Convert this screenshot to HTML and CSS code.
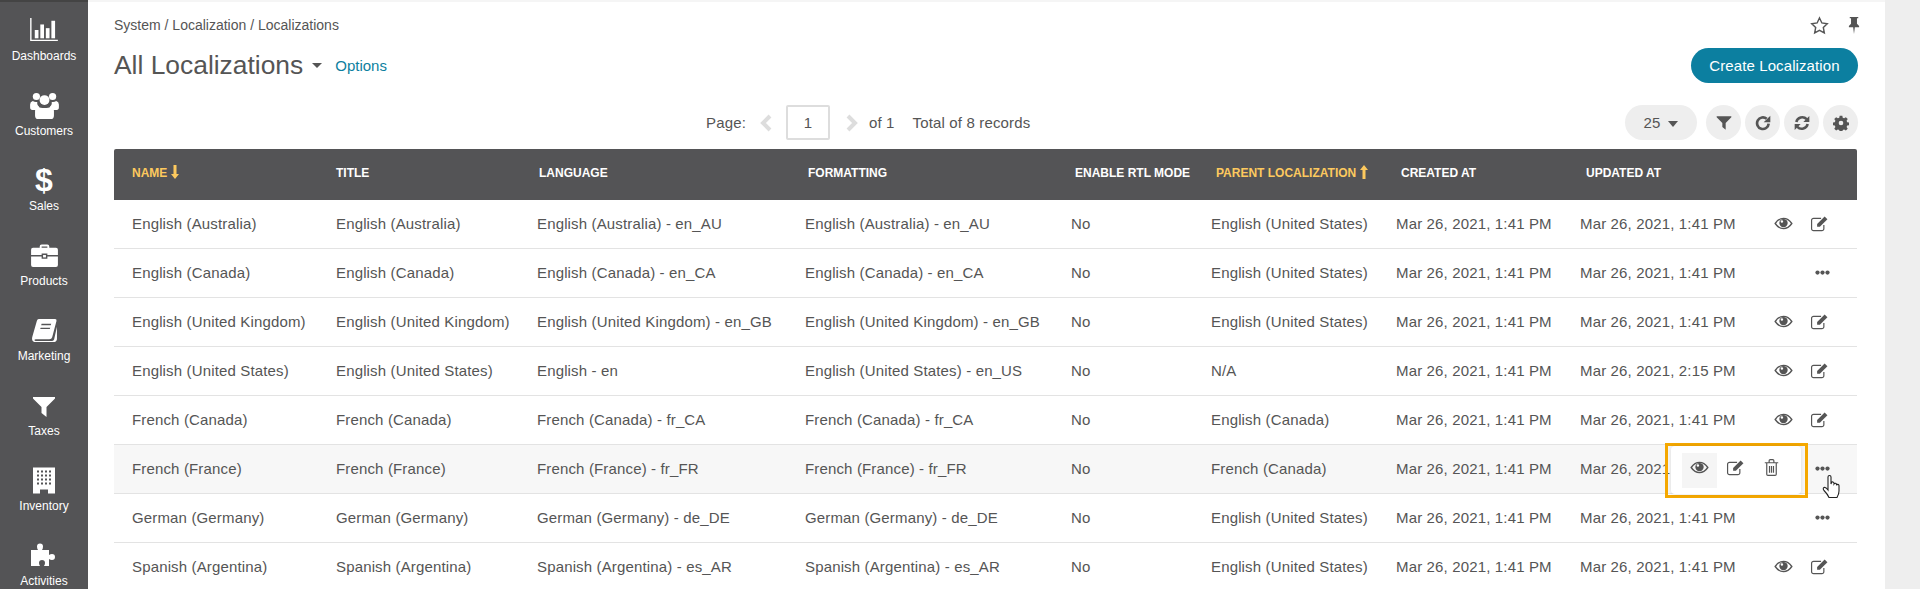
FILE: index.html
```html
<!DOCTYPE html>
<html lang="en">
    <head>
        <meta charset="UTF-8" />
        <title>All Localizations</title>
        <link rel="stylesheet" href="styles.css">
    </head>
    <body>
        <svg class="defs" width="0" height="0">
            <symbol id="i-eye" viewBox="0 0 24 24"><path d="M1.500 12C4.500 7.600 8 5.500 12 5.500s7.500 2.100 10.500 6.500c-3 4.400-6.500 6.500-10.500 6.500S4.500 16.400 1.500 12z" fill="none" stroke="currentColor" stroke-width="1.700"/><circle cx="12" cy="11.500" r="5.300"/><circle cx="10" cy="9.500" r="1.500" fill="#fff"/></symbol>
            <symbol id="i-edit" viewBox="0 0 24 24"><path d="M17.500 14v4.500a2.500 2.500 0 0 1-2.500 2.500H4.500A2.500 2.500 0 0 1 2 18.500V8a2.500 2.500 0 0 1 2.500-2.500H14" fill="none" stroke="currentColor" stroke-width="1.500"/><path d="M9 12.500 18.500 3 22 6.500 12.500 16H9z"/></symbol>
            <symbol id="i-trash" viewBox="0 0 24 24"><path d="M3.500 6h17M6 6v14.500a1.500 1.500 0 0 0 1.500 1.500h9a1.500 1.500 0 0 0 1.500-1.500V6M9 6V3.500A1.500 1.500 0 0 1 10.500 2h3A1.500 1.500 0 0 1 15 3.500V6M9.500 10v8.500M12 10v8.500M14.500 10v8.500" fill="none" stroke="currentColor" stroke-width="1.500"/></symbol>
            <symbol id="i-more" viewBox="0 0 24 8"><circle cx="4" cy="4" r="3.400"/><circle cx="12" cy="4" r="3.400"/><circle cx="20" cy="4" r="3.400"/></symbol>
            <symbol id="i-filter" viewBox="0 0 24 24"><path d="M1 2h22v1.500L14.500 12v10L9.500 18v-6L1 3.500z"/></symbol>
        </svg>

        <nav class="sidebar">
            <a class="nav-item">
                <span class="nav-glyph"><svg width="30" height="24" viewBox="0 0 32 26" fill="#fff"><path d="M1 0h1.500v23.500H31V25H1z"/><rect x="6" y="13" width="4" height="9"/><rect x="12" y="7" width="4" height="15"/><rect x="18" y="11" width="4" height="11"/><rect x="24" y="3" width="4" height="19"/></svg></span>
                <span>Dashboards</span>
            </a>
            <a class="nav-item">
                <span class="nav-glyph"><svg width="29" height="27" viewBox="0 0 32 30" fill="#fff"><circle cx="7" cy="5" r="4"/><circle cx="25" cy="5" r="4"/><circle cx="16" cy="9" r="5.500"/><path d="M3 10c1.500 1 3 1.500 5 1-.5 2 .5 4 2 5.500-2 1-3 2-3.500 3.500H2.500Q0 20 0 17v-3q0-3 3-4zM29 10c-1.500 1-3 1.500-5 1 .5 2-.5 4-2 5.500 2 1 3 2 3.500 3.500h4Q32 20 32 17v-3q0-3-3-4z"/><path d="M9 16c2 2.500 12 2.500 14 0q3.500 1 3.500 5v5q0 4-3.500 4H9q-3.500 0-3.500-4v-5q0-4 3.500-5z"/></svg></span>
                <span>Customers</span>
            </a>
            <a class="nav-item">
                <span class="nav-glyph nav-dollar">$</span>
                <span>Sales</span>
            </a>
            <a class="nav-item">
                <span class="nav-glyph"><svg width="27" height="23" viewBox="0 0 28 24" fill="#fff"><path d="M9 4V2.500Q9 .500 11 .500h6q2 0 2 2V4h7q2 0 2 2v5.500H17V10h-6v1.500H0V6q0-2 2-2zm2 0h6V2.500h-6z" fill-rule="evenodd"/><path d="M0 13h11v2.500h6V13h11v9q0 2-2 2H2q-2 0-2-2z"/><rect x="12.500" y="11.500" width="3" height="2.500"/></svg></span>
                <span>Products</span>
            </a>
            <a class="nav-item">
                <span class="nav-glyph"><svg width="25" height="23" viewBox="0 0 26 24" fill="#fff"><path d="M7 0h17q2 0 1.500 2L21 19q-.5 2-3 2H4q-1.500 0-1.500 1T4 23h17q1.500 0 2-1.500L26 8v13q-.5 3-4 3H4q-4 0-4-3.500 0-1 .3-2L5 2q.5-2 2-2zm3 5-.5 1.500h10L20 5zm-1 4-.5 1.500h10L19 9z" fill-rule="evenodd"/></svg></span>
                <span>Marketing</span>
            </a>
            <a class="nav-item">
                <span class="nav-glyph nav-glyph-low"><svg width="24" height="24" viewBox="0 0 24 24" fill="#fff"><use href="#i-filter"/></svg></span>
                <span>Taxes</span>
            </a>
            <a class="nav-item">
                <span class="nav-glyph"><svg width="22" height="27" viewBox="0 0 22 26" fill="#fff"><path d="M0 0h22v26h-7v-4H7v4H0zm4 3v2h2V3zm4 0v2h2V3zm4 0v2h2V3zm4 0v2h2V3zM4 7v2h2V7zm4 0v2h2V7zm4 0v2h2V7zm4 0v2h2V7zM4 11v2h2v-2zm4 0v2h2v-2zm4 0v2h2v-2zm4 0v2h2v-2zM4 15v2h2v-2zm4 0v2h2v-2zm4 0v2h2v-2zm4 0v2h2v-2z" fill-rule="evenodd"/></svg></span>
                <span>Inventory</span>
            </a>
            <a class="nav-item">
                <span class="nav-glyph"><svg width="26" height="24" viewBox="0 0 26 24" fill="#fff"><path d="M0 7h7Q6 5.500 6 3.500a3 3 0 0 1 6 0Q12 5.500 11 7h7v5q1.500-1 3-1a3 3 0 0 1 0 6q-1.500 0-3-1v7h-5q1-1.500 1-3a3 3 0 0 0-6 0q0 1.500 1 3H0z"/></svg></span>
                <span>Activities</span>
            </a>
        </nav>

        <main class="content">
            <div class="crumb-row">
                <p class="crumbs">System / Localization / Localizations</p>
                <div class="crumb-tools">
                    <svg class="tool-star" viewBox="0 0 24 24"><path d="m12 2.500 3 6.300 6.800.9-5 4.800 1.300 6.900-6.100-3.300-6.100 3.300 1.300-6.900-5-4.800 6.800-.9z" fill="none" stroke="#555" stroke-width="1.800"/></svg>
                    <svg class="tool-pin" viewBox="0 0 14 20" fill="#555"><path d="M2 0h10v1.500H10.500V8L13 10.500V12H8l-1 8-1-8H1v-1.500L3.500 8V1.500H2z"/></svg>
                </div>
            </div>

            <div class="title-row">
                <h1>All Localizations</h1>
                <i class="caret title-caret"></i>
                <a class="options">Options</a>
                <button class="create-btn">Create Localization</button>
            </div>

            <div class="pager-row">
                <div class="pager">
                    <span>Page:</span>
                    <svg class="chev chev-prev" viewBox="0 0 12 20"><path d="M10 3 3 10l7 7" /></svg>
                    <span class="page-input">1</span>
                    <svg class="chev chev-next" viewBox="0 0 12 20"><path d="m2 3 7 7-7 7" /></svg>
                    <span class="page-of">of 1</span>
                    <span class="page-total">Total of 8 records</span>
                </div>
                <div class="toolbar">
                    <button class="pill">25 <i class="caret pill-caret"></i></button>
                    <button class="round"><svg viewBox="0 0 24 24"><use href="#i-filter"/></svg></button>
                    <button class="round"><svg viewBox="0 0 24 24"><path d="M20.500 13a8.700 8.700 0 1 1-3-7.300" fill="none" stroke="#555" stroke-width="4"/><path d="M23 1v10h-10z"/></svg></button>
                    <button class="round"><svg viewBox="0 0 24 24"><path d="M3.500 10.500a9 9 0 0 1 15.500-4.200M20.500 13.500A9 9 0 0 1 5 17.700" fill="none" stroke="#555" stroke-width="3.800"/><path d="M23 1.500v9h-9zM1 22.500v-9h9z"/></svg></button>
                    <button class="round"><svg viewBox="0 0 24 24"><path d="M10 1h4l.6 3 2.100.9 2.600-1.700 2.800 2.800-1.700 2.600.9 2.100 3 .6v4l-3 .6-.9 2.100 1.700 2.600-2.800 2.800-2.600-1.700-2.100.9-.6 3h-4l-.6-3-2.100-.9-2.600 1.700-2.800-2.800 1.700-2.600-.9-2.100-3-.6v-4l3-.6.9-2.100-1.700-2.600 2.800-2.800 2.600 1.700 2.100-.9zm2 7.500a3.500 3.500 0 1 0 0 7 3.500 3.500 0 0 0 0-7z" fill-rule="evenodd"/></svg></button>
                </div>
            </div>

            <div class="table">
                <div class="thead">
                    <span class="sorted">Name <svg class="sort-arrow" viewBox="0 0 8 14"><path d="M2.500 0h3v9H8l-4 5-4-5h2.500z"/></svg></span>
                    <span>Title</span>
                    <span>Language</span>
                    <span>Formatting</span>
                    <span>Enable RTL Mode</span>
                    <span class="sorted">Parent Localization <svg class="sort-arrow" viewBox="0 0 8 14"><path d="M2.500 14h3V5H8L4 0 0 5h2.500z"/></svg></span>
                    <span>Created At</span>
                    <span>Updated At</span>
                </div>

                <div class="row">
                    <span>English (Australia)</span><span>English (Australia)</span><span>English (Australia) - en_AU</span><span>English (Australia) - en_AU</span><span>No</span><span>English (United States)</span><span>Mar 26, 2021, 1:41 PM</span><span>Mar 26, 2021, 1:41 PM</span>
                    <div class="actions"><svg class="act"><use href="#i-eye"/></svg><svg class="act"><use href="#i-edit"/></svg></div>
                </div>
                <div class="row">
                    <span>English (Canada)</span><span>English (Canada)</span><span>English (Canada) - en_CA</span><span>English (Canada) - en_CA</span><span>No</span><span>English (United States)</span><span>Mar 26, 2021, 1:41 PM</span><span>Mar 26, 2021, 1:41 PM</span>
                    <div class="actions"><svg class="more"><use href="#i-more"/></svg></div>
                </div>
                <div class="row">
                    <span>English (United Kingdom)</span><span>English (United Kingdom)</span><span>English (United Kingdom) - en_GB</span><span>English (United Kingdom) - en_GB</span><span>No</span><span>English (United States)</span><span>Mar 26, 2021, 1:41 PM</span><span>Mar 26, 2021, 1:41 PM</span>
                    <div class="actions"><svg class="act"><use href="#i-eye"/></svg><svg class="act"><use href="#i-edit"/></svg></div>
                </div>
                <div class="row">
                    <span>English (United States)</span><span>English (United States)</span><span>English - en</span><span>English (United States) - en_US</span><span>No</span><span>N/A</span><span>Mar 26, 2021, 1:41 PM</span><span>Mar 26, 2021, 2:15 PM</span>
                    <div class="actions"><svg class="act"><use href="#i-eye"/></svg><svg class="act"><use href="#i-edit"/></svg></div>
                </div>
                <div class="row">
                    <span>French (Canada)</span><span>French (Canada)</span><span>French (Canada) - fr_CA</span><span>French (Canada) - fr_CA</span><span>No</span><span>English (Canada)</span><span>Mar 26, 2021, 1:41 PM</span><span>Mar 26, 2021, 1:41 PM</span>
                    <div class="actions"><svg class="act"><use href="#i-eye"/></svg><svg class="act"><use href="#i-edit"/></svg></div>
                </div>
                <div class="row row-hover">
                    <span>French (France)</span><span>French (France)</span><span>French (France) - fr_FR</span><span>French (France) - fr_FR</span><span>No</span><span>French (Canada)</span><span>Mar 26, 2021, 1:41 PM</span><span>Mar 26, 2021, 1:41 PM</span>
                    <div class="actions"><svg class="more"><use href="#i-more"/></svg></div>
                    <div class="highlight">
                        <div class="popup">
                            <span class="popup-btn popup-btn-on"><svg class="act"><use href="#i-eye"/></svg></span>
                            <span class="popup-btn"><svg class="act"><use href="#i-edit"/></svg></span>
                            <span class="popup-btn"><svg class="act"><use href="#i-trash"/></svg></span>
                        </div>
                    </div>
                    <svg class="cursor" viewBox="0 0 20 25"><path d="M6 13V3a1.500 1.500 0 0 1 3 0v7l.5-1.500a1.400 1.400 0 0 1 2.500.5v1a1.400 1.400 0 0 1 2.500.2v1a1.300 1.300 0 0 1 2.500.3V17q0 3-2 6.500H7Q5.500 20 2 16.500.5 14.500 2 13.500q1.500-.8 4 2.500z" fill="#fff" stroke="#222" stroke-width="1.100"/></svg>
                </div>
                <div class="row">
                    <span>German (Germany)</span><span>German (Germany)</span><span>German (Germany) - de_DE</span><span>German (Germany) - de_DE</span><span>No</span><span>English (United States)</span><span>Mar 26, 2021, 1:41 PM</span><span>Mar 26, 2021, 1:41 PM</span>
                    <div class="actions"><svg class="more"><use href="#i-more"/></svg></div>
                </div>
                <div class="row">
                    <span>Spanish (Argentina)</span><span>Spanish (Argentina)</span><span>Spanish (Argentina) - es_AR</span><span>Spanish (Argentina) - es_AR</span><span>No</span><span>English (United States)</span><span>Mar 26, 2021, 1:41 PM</span><span>Mar 26, 2021, 1:41 PM</span>
                    <div class="actions"><svg class="act"><use href="#i-eye"/></svg><svg class="act"><use href="#i-edit"/></svg></div>
                </div>
            </div>
        </main>
    </body>
</html>
```

FILE: styles.css
```css
body {
    margin: 0;
    height: 589px;
    overflow: hidden;
    display: flex;
    background-color: #eee;
    color: #555;
    font-family: "Liberation Sans", Arial, sans-serif;
    font-size: 15px;
}
.defs {
    position: absolute;
}

/* left nav */
.sidebar {
    flex: none;
    width: 88px;
    height: 589px;
    overflow: hidden;
    box-sizing: border-box;
    border-top: 2px solid #444;
    background-color: #545456;
}
.nav-item {
    display: flex;
    flex-direction: column;
    align-items: center;
    height: 75px;
    box-sizing: border-box;
    padding-top: 13px;
    color: #fff;
    font-size: 12px;
    line-height: 16px;
}
.nav-glyph {
    display: flex;
    align-items: center;
    justify-content: center;
    height: 30px;
    margin-bottom: 3px;
}
.nav-glyph-low {
    padding-top: 3px;
    height: 27px;
}
.nav-dollar {
    font-size: 32px;
    line-height: 30px;
    font-weight: bold;
}

/* main column */
.content {
    flex: none;
    width: 1797px;
    height: 589px;
    box-sizing: border-box;
    padding: 0 27px 0 26px;
    border-top: 2px solid #f5f5f5;
    background-color: #fff;
    overflow: hidden;
}
.crumb-row {
    display: flex;
    justify-content: space-between;
    align-items: center;
    height: 32px;
    padding-top: 7px;
}
.crumbs {
    margin: 0;
    font-size: 14px;
}
.crumb-tools {
    display: flex;
    align-items: center;
    gap: 19px;
    margin-right: -2px;
}
.tool-star {
    width: 19px;
    height: 19px;
}
.tool-pin {
    width: 12px;
    height: 17px;
    margin-top: 1px;
}
.title-row {
    display: flex;
    align-items: center;
    height: 35px;
    margin-top: 7px;
}
h1 {
    margin: 0;
    font-size: 26.400px;
    font-weight: normal;
}
.caret {
    display: inline-block;
    border-left: 5px solid transparent;
    border-right: 5px solid transparent;
    border-top: 5px solid #555;
    vertical-align: middle;
}
.title-caret {
    margin-left: 9px;
}
.options {
    margin-left: 13px;
    color: #0d7fa0;
}
.create-btn {
    margin-left: auto;
    width: 167px;
    height: 35px;
    padding: 0;
    border: none;
    border-radius: 18px;
    background-color: #0c7fa0;
    color: #fff;
    font: 15px "Liberation Sans", Arial, sans-serif;
    letter-spacing: .1px;
}
.pager-row {
    display: flex;
    align-items: center;
    justify-content: space-between;
    height: 35px;
    margin-top: 22px;
}
.pager {
    display: flex;
    align-items: center;
    margin-left: 592px;
    letter-spacing: .15px;
}
.chev {
    width: 12px;
    height: 20px;
    fill: none;
    stroke: #ddd;
    stroke-width: 4;
}
.chev-prev {
    margin-left: 14px;
}
.page-input {
    box-sizing: border-box;
    width: 44px;
    height: 35px;
    margin-left: 14px;
    border: 2px solid #ddd;
    border-radius: 2px;
    text-align: center;
    line-height: 31px;
}
.chev-next {
    margin-left: 16px;
}
.page-of {
    margin-left: 11px;
}
.page-total {
    margin-left: 18px;
}
.toolbar {
    display: flex;
    align-items: center;
    gap: 4px;
}
.pill, .round {
    height: 35px;
    padding: 0;
    border: none;
    background-color: #eee;
    color: #555;
    font: 15px "Liberation Sans", Arial, sans-serif;
}
.pill {
    width: 72px;
    margin-right: 5px;
    border-radius: 18px;
}
.pill-caret {
    margin-left: 4px;
    border-left-width: 5.500px;
    border-right-width: 5.500px;
    border-top-width: 6px;
}
.round {
    display: flex;
    align-items: center;
    justify-content: center;
    width: 35px;
    border-radius: 50%;
}
.round svg {
    width: 16px;
    height: 16px;
    fill: #555;
}

/* table */
.table {
    margin-top: 9px;
    width: 1743px;
}
.thead, .row {
    display: grid;
    align-items: center;
}
.thead {
    grid-template-columns: 204px 203px 269px 267px 141px 185px 185px 1fr;
    box-sizing: border-box;
    height: 51px;
    padding-left: 18px;
    padding-bottom: 4px;
    border-radius: 2px 2px 0 0;
    background-color: #545456;
    color: #fff;
    font-size: 12px;
    font-weight: bold;
    text-transform: uppercase;
}
.sorted {
    color: #fdc95e;
}
.sort-arrow {
    width: 8px;
    height: 14px;
    vertical-align: -2px;
    fill: #fdc95e;
}
.row {
    position: relative;
    grid-template-columns: 204px 201px 268px 266px 140px 185px 184px 184px 1fr;
    box-sizing: border-box;
    height: 49px;
    padding-left: 18px;
    padding-bottom: 2px;
    border-bottom: 1px solid #e3e3e3;
    white-space: nowrap;
    letter-spacing: .15px;
}
.row-hover {
    background-color: #f7f7f7;
}
.actions {
    display: flex;
    align-items: center;
    justify-content: flex-end;
    gap: 17px;
    padding-right: 28px;
}
.act {
    width: 19px;
    height: 19px;
    fill: #555;
    color: #555;
}
.more {
    width: 15px;
    height: 5px;
    margin-right: -1px;
    fill: #555;
}

/* row popup and the marker drawn round it */
.highlight {
    position: absolute;
    left: 1551px;
    top: -2px;
    box-sizing: border-box;
    width: 143px;
    height: 55px;
    border: 3px solid #f5a800;
    z-index: 2;
}
.popup {
    display: flex;
    align-items: center;
    gap: 1px;
    box-sizing: border-box;
    width: 130px;
    height: 48px;
    margin: 0 0 0 3px;
    padding-left: 11px;
    border-radius: 4px;
    background-color: #fff;
    box-shadow: 0 0 4px rgba(0, 0, 0, .12);
}
.popup-btn {
    display: flex;
    align-items: center;
    justify-content: center;
    box-sizing: border-box;
    width: 35px;
    height: 35px;
    padding-bottom: 5px;
}
.popup-btn-on {
    background-color: #f5f5f5;
}
.cursor {
    position: absolute;
    left: 1708px;
    top: 29px;
    width: 20px;
    height: 25px;
    z-index: 3;
}
```
